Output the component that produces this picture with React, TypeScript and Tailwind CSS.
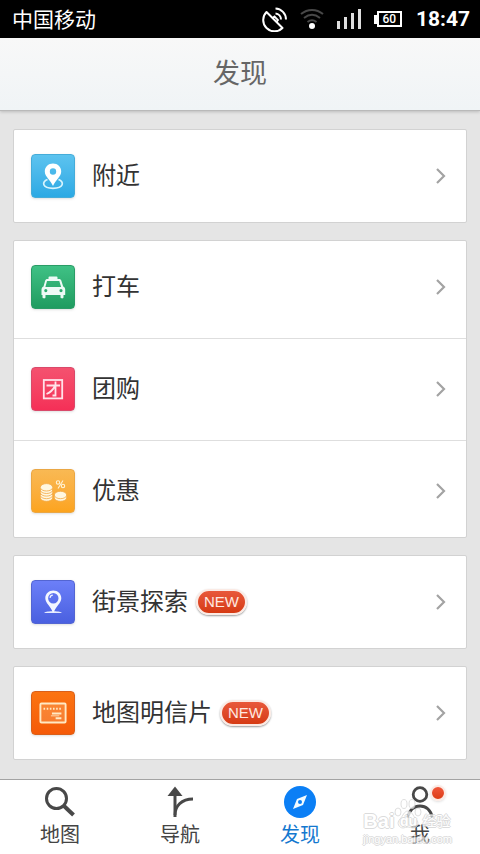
import type { ReactNode } from 'react';

type Entry = {
  label: string;
  tile: string;
  icon: ReactNode;
  isNew?: boolean;
};

function NearbyIcon() {
  return (
    <svg viewBox="1 1 42 42" className="h-full w-full" fill="none" aria-hidden="true">
      <path d="M16.500 25.500c-6 2.200-5.500 8.800 5.500 8.800s11.500-6.600 5.500-8.800" stroke="#d8f4fd" strokeWidth="1.700" />
      <path
        fillRule="evenodd"
        d="M22 9.500c-4.600 0-8.200 3.500-8.200 7.900 0 5.300 5.800 8.600 8.200 14.600 2.400-6 8.200-9.300 8.200-14.600 0-4.400-3.600-7.900-8.200-7.900Zm0 4.800a3.200 3.200 0 1 1 0 6.400 3.200 3.200 0 0 1 0-6.400Z"
        fill="#fff"
      />
    </svg>
  );
}

function TaxiIcon() {
  return (
    <svg viewBox="1 1 42 42" className="h-full w-full" aria-hidden="true">
      <path
        fillRule="evenodd"
        fill="#eefaf6"
        d="M18.500 11.500h7a1 1 0 0 1 1 1V14H28c1.300 0 2 .6 2.300 1.600l1.900 6c1.400.7 2 1.800 2 3.200V30h-1.700v2.200c0 1.600-3 1.600-3 0V30h-15v2.200c0 1.600-3 1.600-3 0V30H10.500v-5.200c0-1.400.6-2.500 2-3.200l1.700-6c.3-1 1-1.600 2.300-1.600h1v-1.500a1 1 0 0 1 1-1ZM16 16l-1.600 6h15.700l-1.800-6H16Zm-1.200 8a1.600 1.600 0 1 0 0 3.200 1.600 1.600 0 0 0 0-3.200Zm15.200 0a1.600 1.600 0 1 0 0 3.200 1.600 1.600 0 0 0 0-3.200Z"
      />
    </svg>
  );
}

function GroupIcon() {
  return (
    <svg viewBox="1 1 42 42" className="h-full w-full" fill="none" stroke="#ffe3ea" aria-hidden="true">
      <rect x="12.800" y="13" width="18.400" height="18.400" strokeWidth="1.800" />
      <path d="M15.500 18.500h13.500M24.500 14.500v14h-3M24 19c-2 4-5 6.500-8.500 8" strokeWidth="1.800" />
    </svg>
  );
}

function CoinsIcon() {
  return (
    <svg viewBox="1 1 42 42" className="h-full w-full" aria-hidden="true">
      <g fill="#fff7e0" stroke="#f2a843" strokeWidth="0.800">
        <ellipse cx="15.500" cy="28.800" rx="6.200" ry="3.500" />
        <ellipse cx="15.500" cy="26.200" rx="6.200" ry="3.500" />
        <ellipse cx="15.500" cy="23.600" rx="6.200" ry="3.500" />
        <ellipse cx="15.500" cy="21" rx="6.200" ry="3.500" />
        <ellipse cx="15.500" cy="18.300" rx="6.200" ry="3.700" />
        <ellipse cx="29.500" cy="28.800" rx="6.200" ry="3.500" />
        <ellipse cx="29.500" cy="26" rx="6.200" ry="3.700" />
      </g>
      <g fill="none" stroke="#fff3d6" strokeWidth="1.100">
        <circle cx="27" cy="13.500" r="1.700" />
        <circle cx="32" cy="17" r="1.700" />
        <path d="M32 11.500l-5 8" />
      </g>
    </svg>
  );
}

function StreetIcon() {
  return (
    <svg viewBox="1 1 42 42" className="h-full w-full" aria-hidden="true">
      <path d="M13 33c1.500-1.500 5.700-1.700 9-1.700s7.500.2 9 1.700Z" fill="#e6ecff" />
      <path
        fillRule="evenodd"
        fill="#f4f7ff"
        d="M22.300 10.500c-4.500 0-8 3.300-8 7.700 0 5 6 8.600 7.300 14h1.400c1.300-5.400 7.300-9 7.300-14 0-4.400-3.500-7.700-8-7.700Zm0 2.600a5.200 5.200 0 1 1 0 10.400 5.200 5.200 0 0 1 0-10.400Z"
      />
      <path d="M19 17.800c.3-1.600 1.300-2.500 2.800-2.600" stroke="#f4f7ff" strokeWidth="1.200" fill="none" />
    </svg>
  );
}

function PostcardIcon() {
  return (
    <svg viewBox="2 2 40 40" className="h-full w-full" fill="none" stroke="#ffe9c4" aria-hidden="true">
      <rect x="10" y="13" width="24" height="18" rx="1" strokeWidth="1.800" fill="#ffe9c4" fillOpacity="0.200" />
      <path d="M13 18h17.500" strokeWidth="2" strokeDasharray="1.500 1.500" />
      <path d="M21 22.500h9M24.500 27h5.500" strokeWidth="1.800" />
      <path d="M20 24.700h8" strokeWidth="0.800" />
    </svg>
  );
}

const groups: Entry[][] = [
  [{ label: '附近', tile: 'from-[#5cc3ef] to-[#2ba9e4] border-[#45acd9]', icon: <NearbyIcon /> }],
  [
    { label: '打车', tile: 'from-[#3fc185] to-[#1f9c60] border-[#2a9c66]', icon: <TaxiIcon /> },
    { label: '团购', tile: 'from-[#f4516f] to-[#f52f57] border-[#d9496a]', icon: <GroupIcon /> },
    { label: '优惠', tile: 'from-[#f9b953] to-[#fca41d] border-[#eaa745]', icon: <CoinsIcon /> },
  ],
  [{ label: '街景探索', tile: 'from-[#6c7ff8] to-[#4a60e0] border-[#5365d2]', icon: <StreetIcon />, isNew: true }],
  [{ label: '地图明信片', tile: 'from-[#fb7412] to-[#f55a08] border-[#d9601a]', icon: <PostcardIcon />, isNew: true }],
];

function Row({ entry }: { entry: Entry }) {
  return (
    <button type="button" className="flex h-[92px] w-full items-center pr-5 pl-[17px] text-left">
      <span className={`h-11 w-11 shrink-0 rounded-[4px] border bg-linear-to-b shadow-sm ${entry.tile}`}>
        {entry.icon}
      </span>
      <span className="ml-[17px] text-2xl text-[#333333]">{entry.label}</span>
      {entry.isNew && (
        <span className="ml-2 rounded-full border-2 border-[#fbeae4] bg-linear-to-b from-[#e8583a] to-[#d63a12] px-[6px] text-[15px] leading-[22px] text-[#ffe9e0] shadow-[0_1px_2px_rgba(0,0,0,0.4)]">
          NEW
        </span>
      )}
      <svg viewBox="0 0 10 16" className="ml-auto h-4 w-[10px]" fill="none" stroke="#a3a3a3" strokeWidth="2.200" aria-hidden="true">
        <path d="M1 1l7 7-7 7" />
      </svg>
    </button>
  );
}

function StatusBar() {
  return (
    <div className="flex h-[38px] items-center bg-black pr-[10px] pl-3 text-white">
      <span className="text-[21px] leading-none">中国移动</span>
      <svg viewBox="0 0 26 26" className="ml-auto h-[26px] w-[26px]" fill="none" stroke="#fff" strokeWidth="2" aria-hidden="true">
        <path d="M4.500 6a10.500 10.500 0 0 0 16 16Z" strokeLinejoin="round" />
        <path d="M10.500 12l2-1.500 3.500 3.500-1.500 2" strokeWidth="1.800" />
        <path d="M13.500 7.500a6 6 0 0 1 5.500 6M13.500 2.500a11 11 0 0 1 10.500 11" />
      </svg>
      <svg viewBox="0 0 24 22" className="ml-3 h-[22px] w-6" fill="none" stroke="#484848" strokeWidth="2" aria-hidden="true">
        <path d="M1 6c6.500-5.500 15.500-5.500 22 0M4 10c5-4 11-4 16 0M7.500 14c3-2.300 6-2.300 9 0" />
        <circle cx="12" cy="18" r="3" fill="#fff" stroke="none" />
      </svg>
      <svg viewBox="0 0 25 22" className="ml-[13px] h-[22px] w-[25px]" fill="#dedede" aria-hidden="true">
        <path d="M0 13h3v8H0zM7 9h3v12H7zM14 5h3v16h-3zM21 1h3v20h-3z" />
      </svg>
      <span className="ml-3 flex items-center">
        <span className="h-[9px] w-[3px] bg-white" />
        <span className="flex h-4 w-[25px] items-center justify-center border-2 border-white font-['Roboto','Liberation_Sans',sans-serif] text-[12px] leading-none font-medium">
          60
        </span>
      </span>
      <span className="ml-[14px] font-['Roboto','Liberation_Sans',sans-serif] text-[21px] leading-none font-bold">18:47</span>
    </div>
  );
}

function MapTab() {
  return (
    <svg viewBox="0 0 32 32" className="h-8 w-8" fill="none" stroke="#484848" aria-hidden="true">
      <circle cx="12.500" cy="12.500" r="10" strokeWidth="3" />
      <path d="M19.500 19.500l10 9.500" strokeWidth="4" />
    </svg>
  );
}

function RouteTab() {
  return (
    <svg viewBox="0 0 32 32" className="h-8 w-8" fill="none" stroke="#484848" strokeWidth="3" aria-hidden="true">
      <path d="M11 8v23" />
      <path d="M11 29c0-9 6.500-16 18-16" strokeWidth="2.800" />
      <path d="M11 .5l7.500 9.500h-15Z" fill="#484848" stroke="none" />
    </svg>
  );
}

function DiscoverTab() {
  return (
    <svg viewBox="0 0 32 32" className="h-8 w-8" aria-hidden="true">
      <circle cx="16" cy="16" r="16" fill="#0b7ff5" />
      <path d="M23 9l-4 10-10 4 4-10Z" fill="#f2fbff" />
      <circle cx="16" cy="16" r="2" fill="#0b7ff5" />
    </svg>
  );
}

function MeTab() {
  return (
    <svg viewBox="0 0 32 32" className="h-8 w-8" fill="none" stroke="#484848" strokeWidth="2.800" aria-hidden="true">
      <circle cx="16" cy="8.500" r="6.800" />
      <path d="M3.500 31.500C5.500 24 9.500 20 16 20s10.500 4 12.500 11.500" />
    </svg>
  );
}

const tabs = [
  { label: '地图', icon: <MapTab />, active: false, dot: false },
  { label: '导航', icon: <RouteTab />, active: false, dot: false },
  { label: '发现', icon: <DiscoverTab />, active: true, dot: false },
  { label: '我', icon: <MeTab />, active: false, dot: true },
];

function Watermark() {
  return (
    <div
      className="pointer-events-none absolute right-7 bottom-[9px] text-white opacity-75 [text-shadow:1px_0_#cfcfcf,-1px_0_#cfcfcf,0_1px_#cfcfcf,0_-1px_#cfcfcf]"
      aria-hidden="true"
    >
      <div className="flex items-center text-[20px] leading-[24px]">
        <span className="font-bold">Bai</span>
        <span className="relative flex h-6 w-7 items-center justify-center">
          <svg viewBox="0 0 28 32" className="absolute -top-3 h-8 w-7" fill="#fff" stroke="#d4d4d4">
            <ellipse cx="4" cy="15" rx="3" ry="4" />
            <ellipse cx="10" cy="7" rx="3" ry="4.500" />
            <ellipse cx="18" cy="7" rx="3" ry="4.500" />
            <ellipse cx="24" cy="15" rx="3" ry="4" />
            <path d="M14 14c4 0 5 5 8 8 4 4 1 9-3 9-2 0-3-1-5-1s-3 1-5 1c-4 0-7-5-3-9 3-3 4-8 8-8Z" />
          </svg>
          <span className="relative text-[14px] font-bold">du</span>
        </span>
        <span className="text-[14px]">经验</span>
      </div>
      <div className="text-[11px] leading-[12px]">jingyan.baidu.com</div>
    </div>
  );
}

export default function App() {
  return (
    <div className="flex min-h-screen flex-col bg-[#e5e5e5] font-['Liberation_Sans','Noto_Sans_CJK_SC',sans-serif]">
      <StatusBar />
      <header className="flex h-[73px] items-center justify-center border-b border-[#b9b9b9] bg-linear-to-b from-[#f8f8f8] to-[#f0f4f6] shadow-[0_1px_3px_rgba(0,0,0,0.18)]">
        <h1 className="text-[27px] leading-none text-[#666666]">发现</h1>
      </header>
      <main className="flex flex-1 flex-col gap-[17px] px-[13px] pt-[18px] pb-[19px]">
        {groups.map((group) => (
          <section key={group[0].label} className="rounded-[2px] border border-[#d2d2d2] bg-white">
            {group.map((entry, index) => (
              <div key={entry.label}>
                {index > 0 && <hr className="mt-[5px] mb-1 border-[#dedede]" />}
                <Row entry={entry} />
              </div>
            ))}
          </section>
        ))}
      </main>
      <nav className="relative grid h-[75px] grid-cols-4 border-t border-[#a3a3a3] bg-white">
        {tabs.map((tab) => (
          <a
            key={tab.label}
            href="#"
            className={`flex flex-col items-center pt-[6px] text-xl leading-[34px] ${tab.active ? 'text-[#1478cf]' : 'text-[#444444]'}`}
          >
            <span className="relative">
              {tab.icon}
              {tab.dot && (
                <span className="absolute -top-px -right-[10px] h-4 w-4 rounded-full border-2 border-[#fbeae4] bg-linear-to-b from-[#f0563a] to-[#dc3c12] shadow-sm" />
              )}
            </span>
            {tab.label}
          </a>
        ))}
        <Watermark />
      </nav>
    </div>
  );
}
